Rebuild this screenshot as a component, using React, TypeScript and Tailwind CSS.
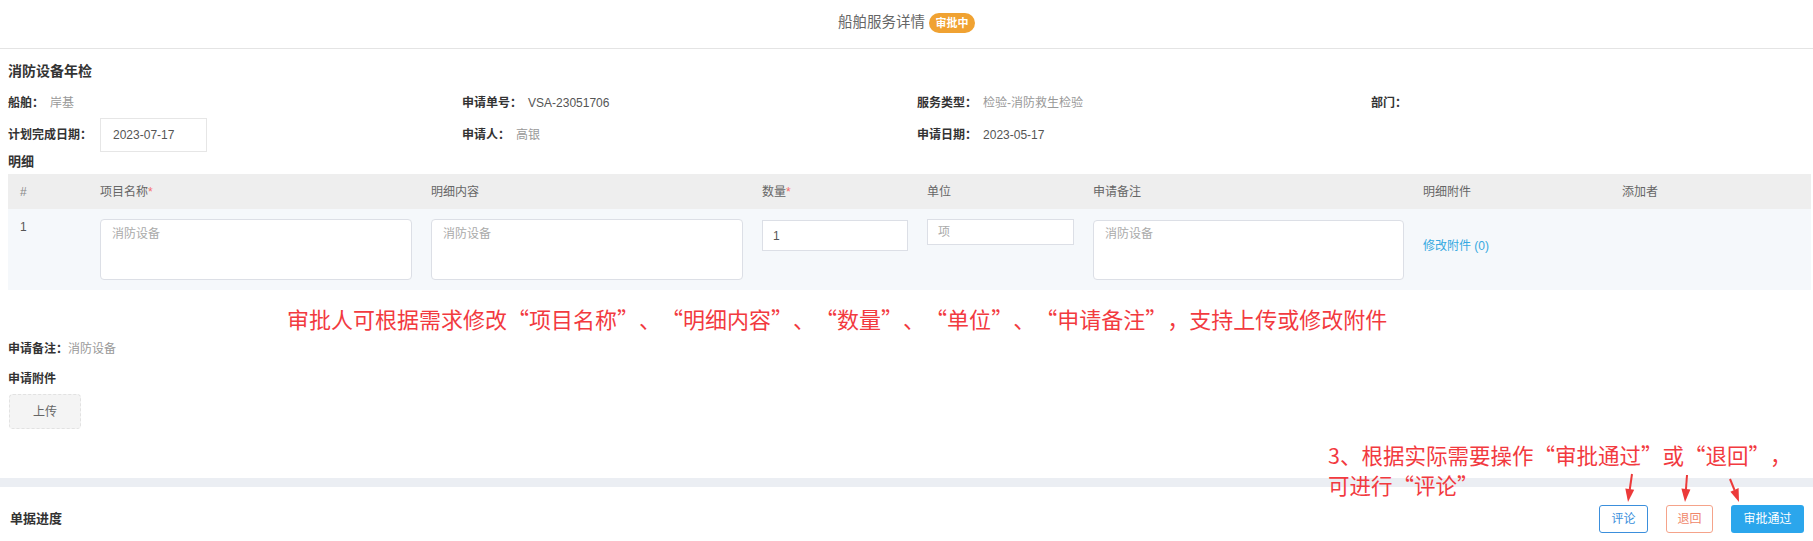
import React from "react";

const font = "font-['Liberation_Sans','Noto_Sans_CJK_SC',sans-serif]";

function Info({ label, value, dark }: { label: string; value?: string; dark?: boolean }) {
    return (
        <div className="flex items-center h-5 text-xs">
            <span className="font-bold text-[#333] mr-[6px]">{label}：</span>
            {value && <span className={dark ? "text-[#555]" : "text-[#999]"}>{value}</span>}
        </div>
    );
}

// full-width curly quotes, like the note font in the original
function Note({ text }: { text: string }) {
    return (
        <>
            {text.split(/([“”])/).map((part, i) =>
                part === "“" ? (
                    <span key={i} className="inline-block w-[1em] text-right">“</span>
                ) : part === "”" ? (
                    <span key={i} className="inline-block w-[1em] text-left">”</span>
                ) : (
                    <React.Fragment key={i}>{part}</React.Fragment>
                )
            )}
        </>
    );
}

const cols = "grid grid-cols-[92px_331px_331px_165px_166px_330px_199px_1fr]";

export default function App() {
    return (
        <div className={`relative w-[1813px] min-h-screen bg-white ${font}`}>
            {/* header */}
            <div className="h-[49px] border-b border-[#e4e4e4] flex items-center justify-center gap-[4px] pb-[2px]">
                <span className="text-[14.5px] text-[#666]">船舶服务详情</span>
                <span className="h-5 w-[46px] rounded-full bg-[#f0a232] text-white text-[11px] font-bold flex items-center justify-center">
                    审批中
                </span>
            </div>

            <div className="pl-2 pr-[2px]">
                <div className="mt-3 h-5 leading-5 text-[14px] font-bold text-[#333]">消防设备年检</div>

                <div className="mt-3 grid grid-cols-[454px_455px_454px_1fr]">
                    <Info label="船舶" value="岸基" />
                    <Info label="申请单号" value="VSA-23051706" dark />
                    <Info label="服务类型" value="检验-消防救生检验" />
                    <Info label="部门" />
                </div>

                <div className="mt-[5px] grid grid-cols-[454px_455px_454px_1fr] items-center h-[34px]">
                    <div className="flex items-center text-xs">
                        <span className="font-bold text-[#333] mr-2">计划完成日期：</span>
                        <div className="w-[107px] h-[34px] border border-[#e6e6e6] flex items-center pl-3 text-[#555]">
                            2023-07-17
                        </div>
                    </div>
                    <Info label="申请人" value="高银" />
                    <Info label="申请日期" value="2023-05-17" dark />
                    <div />
                </div>

                <div className="h-5 leading-5 text-[13px] font-bold text-[#333]">明细</div>

                {/* table */}
                <div className="mt-[2px]">
                    <div className={`${cols} h-[35px] items-center bg-[#eeeeee] text-xs text-[#666]`}>
                        <div className="pl-3 text-[#888]">#</div>
                        <div>项目名称<span className="text-[#f56c6c]">*</span></div>
                        <div>明细内容</div>
                        <div>数量<span className="text-[#f56c6c]">*</span></div>
                        <div>单位</div>
                        <div>申请备注</div>
                        <div>明细附件</div>
                        <div>添加者</div>
                    </div>
                    <div className={`${cols} h-[81px] bg-[#f5f8fb] text-xs pt-[10px]`}>
                        <div className="pl-3 leading-4 text-[#555]">1</div>
                        <div className="pr-[19px]">
                            <div className="h-[61px] rounded bg-white border border-[#dcdfe6] px-[11px] py-[5px] leading-[18px] text-[#aaa]">消防设备</div>
                        </div>
                        <div className="pr-[19px]">
                            <div className="h-[61px] rounded bg-white border border-[#dcdfe6] px-[11px] py-[5px] leading-[18px] text-[#aaa]">消防设备</div>
                        </div>
                        <div className="pr-[19px]">
                            <div className="mt-px h-[31px] bg-white border border-[#dcdfe6] px-[10px] flex items-center text-[#555]">1</div>
                        </div>
                        <div className="pr-[19px]">
                            <div className="h-[26px] bg-white border border-[#dcdfe6] px-[10px] flex items-center text-[#aaa]">项</div>
                        </div>
                        <div className="pr-[19px]">
                            <div className="mt-px h-[60px] rounded bg-white border border-[#dcdfe6] px-[11px] py-[4px] leading-[18px] text-[#aaa]">消防设备</div>
                        </div>
                        <div className="pt-[19px] text-[#36a9e1]">修改附件 (0)</div>
                        <div />
                    </div>
                </div>

                <div className="mt-[49px] flex items-center h-5 text-xs">
                    <span className="font-bold text-[#333]">申请备注：</span>
                    <span className="text-[#999]">消防设备</span>
                </div>
                <div className="mt-[10px] h-5 leading-5 text-xs font-bold text-[#333]">申请附件</div>
                <div className="mt-[5px] w-[72px] h-[35px] ml-px rounded-sm bg-[#f4f4f4] border border-dashed border-[#e2e2e2] flex items-center justify-center text-xs text-[#666]">
                    上传
                </div>
            </div>

            <div className="mt-[49px] h-[9px] bg-[#ebeef3]" />

            <div className="pt-[18px] pl-[10px] pr-[9px] flex items-center justify-between">
                <span className="text-[13px] font-bold text-[#333]">单据进度</span>
                <div className="flex items-center gap-[18px] text-xs">
                    <button className="h-7 w-[49px] rounded-[3px] border border-[#3b8fdc] text-[#3b8fdc] bg-white">评论</button>
                    <button className="h-7 w-[47px] rounded-[3px] border border-[#f5a38a] text-[#f0876a] bg-white">退回</button>
                    <button className="h-7 w-[73px] rounded-[3px] bg-[#2ba6ec] text-white">审批通过</button>
                </div>
            </div>

            {/* annotations */}
            <div className="absolute left-[287px] top-[303px] leading-[30px] text-[22px] text-[#f23a3f] font-['Noto_Sans_CJK_SC',sans-serif] whitespace-nowrap">
                <Note text="审批人可根据需求修改“项目名称”、“明细内容”、“数量”、“单位”、“申请备注”，支持上传或修改附件" />
            </div>
            <div className="absolute left-[1328px] top-[440px] leading-[30px] text-[21.5px] text-[#f23a3f] font-['Noto_Sans_CJK_SC',sans-serif] whitespace-nowrap">
                <div><Note text="3、根据实际需要操作“审批通过”或“退回”，" /></div>
                <div><Note text="可进行“评论”" /></div>
            </div>
            <svg className="absolute left-[1600px] top-[468px] pointer-events-none" width="160" height="40" viewBox="0 0 160 40">
                <g stroke="#ec3a3a" strokeWidth="2" fill="#ec3a3a">
                    <line x1="32" y1="6" x2="29.7" y2="22" />
                    <polygon stroke="none" points="28,34 34.2,21.8 25.3,20.4" />
                    <line x1="87" y1="7" x2="85.9" y2="22" />
                    <polygon stroke="none" points="85,34 90.4,21.4 81.4,20.6" />
                    <line x1="130" y1="11" x2="134.5" y2="22" />
                    <polygon stroke="none" points="139,34 138.6,20.1 130.4,23.8" />
                </g>
            </svg>
        </div>
    );
}
